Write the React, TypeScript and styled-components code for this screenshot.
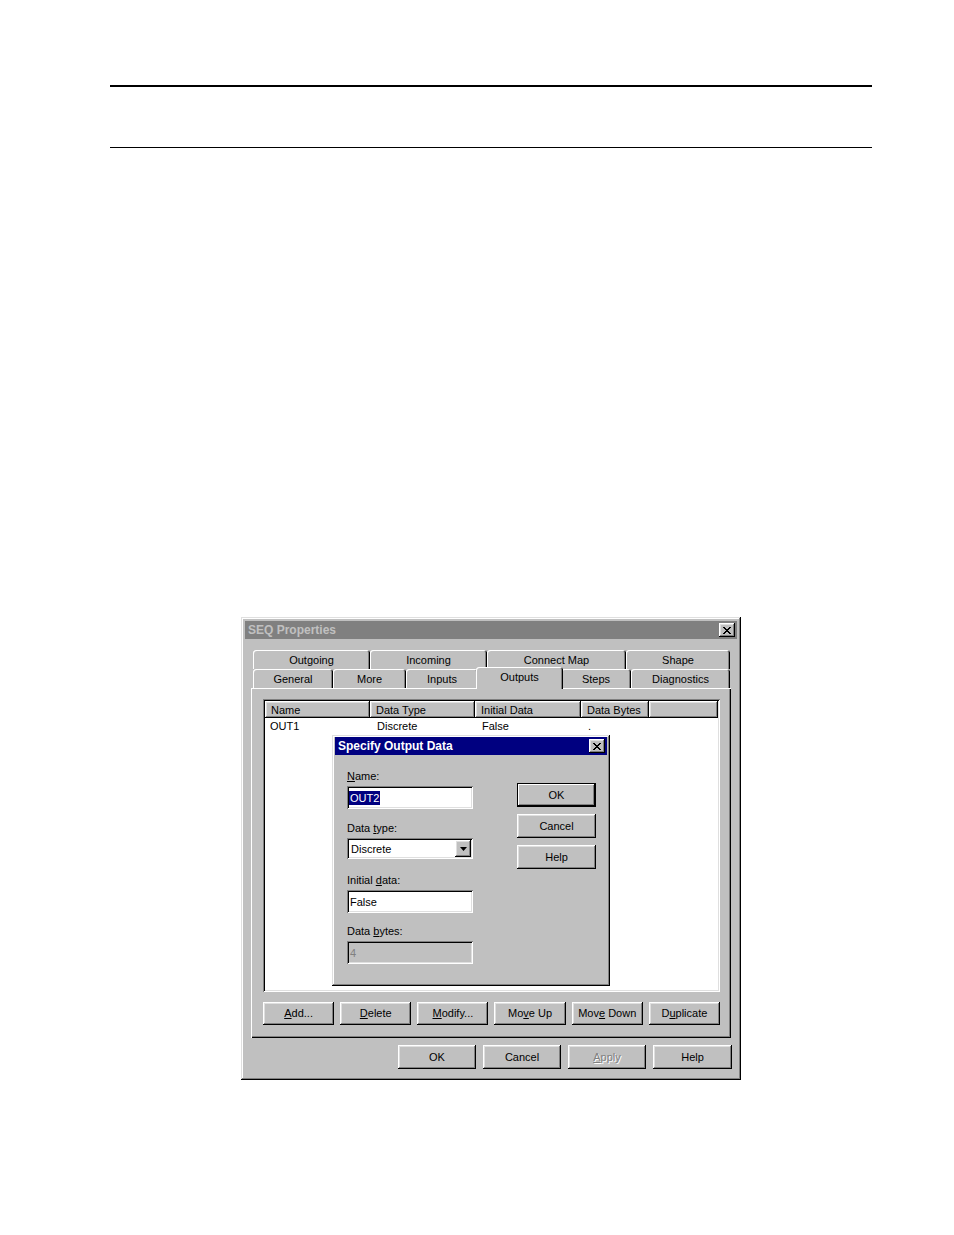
import styled, { createGlobalStyle, css } from "styled-components";

const GlobalStyle = createGlobalStyle`
  body {
    margin: 0;
    background: #fff;
    font-family: "Liberation Sans", Arial, sans-serif;
  }
`;

const raised = css`
  box-shadow: inset -1px -1px #000, inset 1px 1px #fff, inset -2px -2px #808080,
    inset 2px 2px #dfdfdf;
`;

const sunken = css`
  box-shadow: inset 1px 1px #808080, inset -1px -1px #fff, inset 2px 2px #000,
    inset -2px -2px #dfdfdf;
`;

const backTabs = [
  { label: "Outgoing", width: 117 },
  { label: "Incoming", width: 117 },
  { label: "Connect Map", width: 139 },
  { label: "Shape", width: 104 },
];

const frontTabs = [
  { label: "General", width: 80 },
  { label: "More", width: 73 },
  { label: "Inputs", width: 72 },
  { label: "Outputs", width: 83, active: true },
  { label: "Steps", width: 70 },
  { label: "Diagnostics", width: 99 },
];

const columns = [
  { label: "Name", width: 105 },
  { label: "Data Type", width: 105 },
  { label: "Initial Data", width: 106 },
  { label: "Data Bytes", width: 68 },
];

function CloseGlyph() {
  return (
    <svg width="8" height="7" viewBox="0 0 8 7">
      <path
        d="M0 0h2v1h1v1h2V1h1V0h2v1H7v1H6v1H5v1h1v1h1v1h1v1H6V6H5V5H3v1H2v1H0V6h1V5h1V4h1V3H2V2H1V1H0z"
        fill="#000"
      />
    </svg>
  );
}

function Key({ children }: { children: string }) {
  return <Underline>{children}</Underline>;
}

export default function App() {
  return (
    <>
      <GlobalStyle />
      <Page>
        <ThickRule />
        <ThinRule />
        <Window>
          <TitleBar $active={false}>
            <TitleText $active={false}>SEQ Properties</TitleText>
            <CloseButton>
              <CloseGlyph />
            </CloseButton>
          </TitleBar>
          <WindowBody>
            <TabRow>
              {backTabs.map((t) => (
                <Tab key={t.label} $width={t.width}>
                  {t.label}
                </Tab>
              ))}
            </TabRow>
            <TabRow>
              {frontTabs.map((t) => (
                <Tab key={t.label} $width={t.width} $active={t.active}>
                  {t.label}
                </Tab>
              ))}
            </TabRow>
            <Panel>
              <ListView>
                <HeaderRow>
                  {columns.map((c) => (
                    <HeaderCell key={c.label} $width={c.width}>
                      {c.label}
                    </HeaderCell>
                  ))}
                  <HeaderCell $width={0} $fill />
                </HeaderRow>
                <DataRow>
                  <DataCell $width={105} $pad={5}>
                    OUT1
                  </DataCell>
                  <DataCell $width={105}>Discrete</DataCell>
                  <DataCell $width={106}>False</DataCell>
                  <DataCell $width={68}>.</DataCell>
                </DataRow>

                <SubDialog>
                  <TitleBar $active>
                    <TitleText $active>Specify Output Data</TitleText>
                    <CloseButton>
                      <CloseGlyph />
                    </CloseButton>
                  </TitleBar>
                  <SubBody>
                    <FieldColumn>
                      <Group>
                        <Label>
                          <Key>N</Key>ame:
                        </Label>
                        <TextField>
                          <Selected>OUT2</Selected>
                        </TextField>
                      </Group>
                      <Group $space={15}>
                        <Label>
                          Data <Key>t</Key>ype:
                        </Label>
                        <Combo>
                          <ComboText>Discrete</ComboText>
                          <ComboButton>
                            <svg width="7" height="4" viewBox="0 0 7 4">
                              <path d="M0 0h7L3.5 4z" fill="#000" />
                            </svg>
                          </ComboButton>
                        </Combo>
                      </Group>
                      <Group $space={12}>
                        <Label>
                          Initial <Key>d</Key>ata:
                        </Label>
                        <TextField>False</TextField>
                      </Group>
                      <Group>
                        <Label>
                          Data <Key>b</Key>ytes:
                        </Label>
                        <TextField $disabled>4</TextField>
                      </Group>
                    </FieldColumn>
                    <ButtonColumn>
                      <Button $width={79} $default>
                        OK
                      </Button>
                      <Button $width={79}>Cancel</Button>
                      <Button $width={79}>Help</Button>
                    </ButtonColumn>
                  </SubBody>
                </SubDialog>
              </ListView>
              <ListButtons>
                <Button>
                  <Key>A</Key>dd...
                </Button>
                <Button>
                  <Key>D</Key>elete
                </Button>
                <Button>
                  <Key>M</Key>odify...
                </Button>
                <Button>
                  Mo<Key>v</Key>e Up
                </Button>
                <Button>
                  Mov<Key>e</Key> Down
                </Button>
                <Button>
                  D<Key>u</Key>plicate
                </Button>
              </ListButtons>
            </Panel>
            <DialogButtons>
              <Button $width={78}>OK</Button>
              <Button $width={78}>Cancel</Button>
              <Button $width={78} $disabled>
                <Key>A</Key>pply
              </Button>
              <Button $width={79}>Help</Button>
            </DialogButtons>
          </WindowBody>
        </Window>
      </Page>
    </>
  );
}

const Page = styled.div`
  display: flex;
  flex-direction: column;
  align-items: flex-start;
  padding: 85px 82px 155px 110px;
`;

const ThickRule = styled.div`
  align-self: stretch;
  height: 2px;
  background: #000;
`;

const ThinRule = styled.div`
  align-self: stretch;
  height: 1px;
  margin-top: 60px;
  background: #000;
`;

const Window = styled.div`
  margin: 469px 0 0 131px;
  width: 500px;
  height: 463px;
  box-sizing: border-box;
  padding: 4px;
  background: #c0c0c0;
  box-shadow: inset -1px -1px #000, inset 1px 1px #dfdfdf, inset -2px -2px #808080,
    inset 2px 2px #fff;
  display: flex;
  flex-direction: column;
`;

const TitleBar = styled.div<{ $active?: boolean }>`
  height: 18px;
  display: flex;
  align-items: center;
  justify-content: space-between;
  padding: 0 2px 0 3px;
  background: ${(p) => (p.$active ? "#000080" : "#808080")};
`;

const TitleText = styled.span<{ $active?: boolean }>`
  font-size: 12px;
  font-weight: bold;
  color: ${(p) => (p.$active ? "#fff" : "#c0c0c0")};
`;

const CloseButton = styled.div`
  width: 16px;
  height: 14px;
  display: flex;
  align-items: center;
  justify-content: center;
  background: #c0c0c0;
  ${raised}
`;

const WindowBody = styled.div`
  flex: 1;
  display: flex;
  flex-direction: column;
  padding: 11px 6px 7px 6px;
`;

const TabRow = styled.div`
  height: 19px;
  display: flex;
  align-items: flex-end;
  padding-left: 2px;
`;

const Tab = styled.div<{ $width: number; $active?: boolean }>`
  flex: none;
  width: ${(p) => p.$width}px;
  height: 19px;
  box-sizing: border-box;
  display: flex;
  align-items: center;
  justify-content: center;
  padding-top: 1px;
  font-size: 11px;
  color: #000;
  background: #c0c0c0;
  border-radius: 3px 3px 0 0;
  box-shadow: inset 1px 1px #fff, inset -1px 0 #000, inset -2px 0 #808080;

  ${(p) =>
    p.$active &&
    css`
      position: relative;
      z-index: 1;
      width: ${p.$width + 4}px;
      height: 22px;
      margin: 0 -2px -1px -2px;
      padding-top: 0;
      padding-bottom: 3px;
    `}
`;

const Panel = styled.div`
  display: flex;
  flex-direction: column;
  padding: 11px 11px 13px 12px;
  background: #c0c0c0;
  box-shadow: inset 1px 1px #fff, inset -1px -1px #000, inset -2px -2px #808080;
`;

const ListView = styled.div`
  position: relative;
  height: 293px;
  box-sizing: border-box;
  padding: 2px;
  background: #fff;
  ${sunken}
`;

const HeaderRow = styled.div`
  display: flex;
  height: 17px;
`;

const HeaderCell = styled.div<{ $width: number; $fill?: boolean }>`
  flex: ${(p) => (p.$fill ? "1" : "none")};
  width: ${(p) => p.$width}px;
  box-sizing: border-box;
  padding-left: 6px;
  display: flex;
  align-items: center;
  font-size: 11px;
  color: #000;
  background: #c0c0c0;
  ${raised}
`;

const DataRow = styled.div`
  display: flex;
  height: 15px;
  align-items: center;
`;

const DataCell = styled.div<{ $width: number; $pad?: number }>`
  flex: none;
  width: ${(p) => p.$width}px;
  box-sizing: border-box;
  padding-left: ${(p) => p.$pad ?? 7}px;
  font-size: 11px;
  color: #000;
`;

const SubDialog = styled.div`
  position: absolute;
  left: 69px;
  top: 36px;
  width: 278px;
  height: 251px;
  box-sizing: border-box;
  padding: 2px 3px 3px 3px;
  background: #c0c0c0;
  box-shadow: inset -1px -1px #000, inset 1px 1px #dfdfdf, inset -2px -2px #808080,
    inset 2px 2px #fff;
  display: flex;
  flex-direction: column;
`;

const SubBody = styled.div`
  display: flex;
  gap: 44px;
  padding: 15px 0 0 12px;
`;

const FieldColumn = styled.div`
  display: flex;
  flex-direction: column;
  width: 126px;
`;

const Group = styled.div<{ $space?: number }>`
  display: flex;
  flex-direction: column;
  gap: 3px;
  padding-bottom: ${(p) => p.$space ?? 13}px;
`;

const Label = styled.div`
  font-size: 11px;
  line-height: 13px;
  color: #000;
`;

const Underline = styled.span`
  text-decoration: underline;
`;

const TextField = styled.div<{ $disabled?: boolean }>`
  height: 23px;
  box-sizing: border-box;
  padding: 0 3px;
  display: flex;
  align-items: center;
  font-size: 11px;
  color: ${(p) => (p.$disabled ? "#808080" : "#000")};
  background: ${(p) => (p.$disabled ? "#c0c0c0" : "#fff")};
  ${sunken}
`;

const Selected = styled.span`
  background: #000080;
  color: #fff;
  padding: 0 1px;
  margin-left: -1px;
  line-height: 14px;
`;

const Combo = styled.div`
  height: 21px;
  box-sizing: border-box;
  padding: 2px;
  display: flex;
  align-items: stretch;
  background: #fff;
  ${sunken}
`;

const ComboText = styled.div`
  flex: 1;
  display: flex;
  align-items: center;
  padding-left: 2px;
  font-size: 11px;
  color: #000;
`;

const ComboButton = styled.div`
  width: 16px;
  display: flex;
  align-items: center;
  justify-content: center;
  background: #c0c0c0;
  ${raised}
`;

const ButtonColumn = styled.div`
  display: flex;
  flex-direction: column;
  gap: 7px;
  padding-top: 13px;
`;

const Button = styled.div<{ $width?: number; $default?: boolean; $disabled?: boolean }>`
  width: ${(p) => (p.$width ? `${p.$width}px` : "auto")};
  height: ${(p) => (p.$width ? "24px" : "23px")};
  line-height: ${(p) => (p.$width ? "24px" : "23px")};
  box-sizing: border-box;
  text-align: center;
  white-space: nowrap;
  font-size: 11px;
  color: ${(p) => (p.$disabled ? "#808080" : "#000")};
  text-shadow: ${(p) => (p.$disabled ? "1px 1px #fff" : "none")};
  background: #c0c0c0;
  ${(p) =>
    p.$default
      ? css`
          box-shadow: inset 0 0 0 1px #000, inset -2px -2px #000, inset 2px 2px #fff,
            inset -3px -3px #808080;
        `
      : raised}
`;

const ListButtons = styled.div`
  display: grid;
  grid-template-columns: repeat(6, 1fr);
  gap: 6px;
  margin-top: 10px;
`;

const DialogButtons = styled.div`
  display: flex;
  justify-content: flex-end;
  gap: 7px;
  margin: 7px -1px 0 0;
`;
